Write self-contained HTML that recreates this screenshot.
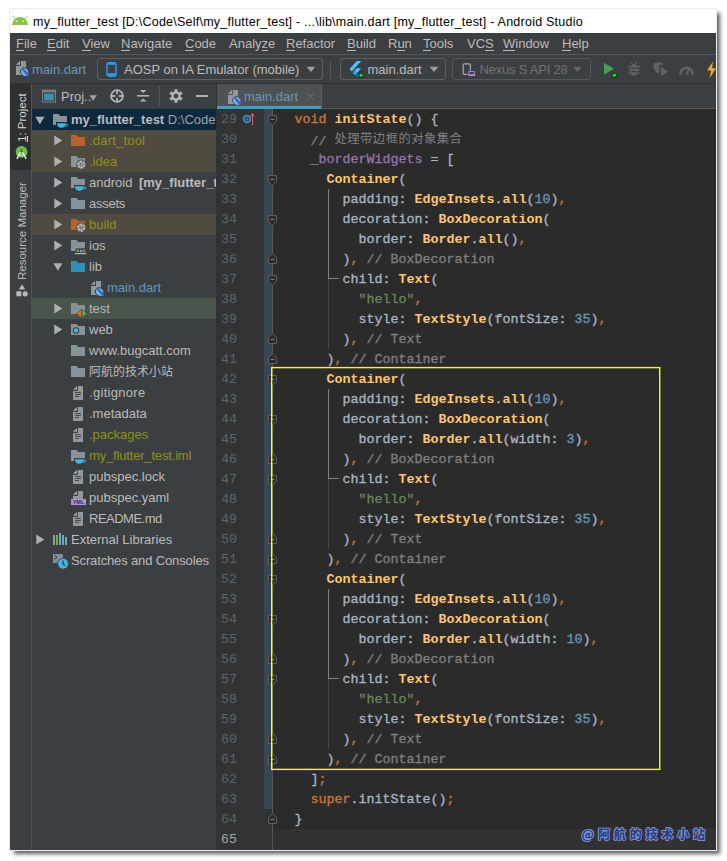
<!DOCTYPE html>
<html lang="zh">
<head>
<meta charset="utf-8">
<title>my_flutter_test - Android Studio</title>
<style>
html,body{margin:0;padding:0;background:#fff;}
body{width:727px;height:861px;position:relative;overflow:hidden;font-family:"Liberation Sans","Noto Sans CJK SC",sans-serif;font-size:13px;color:#bbbbbb;}
.abs,#win>div,#win>svg{position:absolute;box-sizing:border-box;}
#win div,#win svg{box-sizing:border-box;}
#shadow{position:absolute;left:10px;top:9px;width:706px;height:841px;box-shadow:3.5px 3.5px 4px 0px rgba(0,0,0,.62);}
#win{position:absolute;left:0;top:0;width:727px;height:861px;}
#frame{left:10px;top:9px;width:706px;height:841px;background:#3c3f41;}
#edge{left:9px;top:8px;width:708px;height:843px;border:1px solid #ececec;}
#title{left:10px;top:9px;width:706px;height:24px;background:#fff;}
#titletxt{left:33px;top:13.5px;height:16px;line-height:16px;font-size:12.5px;letter-spacing:0.23px;color:#000;white-space:pre;}
#menubar{left:10px;top:33px;width:706px;height:21px;background:#3c3f41;}
.mi{top:35px;height:18px;line-height:18px;font-size:13px;color:#bbbbbb;white-space:pre;}
.mu{top:50px;height:1px;background:#bbbbbb;}
#msep{left:10px;top:54px;width:706px;height:1px;background:#555758;}
#toolbar{left:10px;top:55px;width:706px;height:28px;background:#3c3f41;}
#tsep{left:10px;top:83px;width:706px;height:1px;background:#323232;}
/* stripe */
#stripe{left:10px;top:84px;width:21px;height:766px;background:#3c3f41;}
#stripesep{left:31px;top:84px;width:1px;height:766px;background:#515456;}
#sbtn1{left:10px;top:84px;width:21px;height:86px;background:#2d2f30;}
.vtxt{transform-origin:0 0;transform:rotate(-90deg);white-space:pre;font-size:12px;color:#bbbbbb;height:16px;line-height:16px;}
/* project panel */
#proj{left:32px;top:84px;width:184px;height:766px;background:#3c3f41;}
#projsep{left:216px;top:84px;width:1px;height:766px;background:#323232;}
.row{left:32px;width:184px;height:21px;}
.tl{height:21px;line-height:21px;font-size:13px;white-space:pre;color:#bbbbbb;}
.tl b{font-weight:700;}
.ol{color:#8f901a;}
.md{color:#6897bb;}
/* editor */
#tabs{left:217px;top:84px;width:499px;height:25px;background:#3c3f41;}
#tab1{left:217px;top:84px;width:104px;height:25px;background:#4e5254;}
#tabul{left:217px;top:106px;width:104px;height:3px;background:#3f9fbf;}
#tabsline{left:321px;top:108px;width:395px;height:1px;background:#575a5c;}
#tabedge{left:321px;top:84px;width:1px;height:24px;background:#5a5d5f;}
#gutter{left:217px;top:109px;width:55px;height:741px;background:#313335;}
#gline{left:272px;top:109px;width:1px;height:741px;background:#555555;}
#gmod{left:264px;top:109px;width:8px;height:700px;background:#374752;}
#code{left:273px;top:109px;width:443px;height:741px;background:#2b2b2b;}
#caret{left:273px;top:829px;width:443px;height:21px;background:#323232;}
.ln{left:217px;width:20px;height:20px;line-height:20px;text-align:right;font-family:"Liberation Mono",monospace;font-size:13.33px;color:#606366;}
.ln.cur{color:#a4a3a3;}
.cl{height:20px;line-height:20px;font-family:"Liberation Mono","Noto Sans CJK SC",monospace;font-size:13.33px;white-space:pre;color:#a9b7c6;}
.cl span{-webkit-text-stroke:0.3px currentColor;}
.cl span.f,.cl span.cc{-webkit-text-stroke:0;}
.k{color:#cc7832;}
.f{color:#ffc66d;font-weight:700;}
.c{color:#808080;}
.cc{color:#808080;font-family:"Noto Sans CJK SC",sans-serif;font-size:12.4px;letter-spacing:0.4px;position:relative;top:-2px;}
.s{color:#6a8759;}
.n{color:#6897bb;}
.v{color:#9876aa;}
.d{color:#a9b7c6;}

.ig{width:1px;background:#474747;}
.igb{width:1px;background:#808080;}
.igh{height:1px;background:#808080;}
#wm{left:578px;top:824px;height:20px;line-height:20px;font-size:12px;white-space:pre;font-weight:700;letter-spacing:1.3px;color:#3b4a8f;-webkit-text-stroke:0.6px #7f9cf5;font-family:"Noto Sans CJK SC","Liberation Sans",sans-serif;}
</style>
</head>
<body>
<div id="shadow"></div>
<div id="win">
<div id="edge"></div>
<div id="frame"></div>
<div id="title"></div>
<svg class="abs" style="left:12px;top:15px" width="17" height="11" viewBox="0 0 17 11"><path d="M0 10C0.2 5.2 3.8 1.9 8 1.9C12.2 1.9 15.8 5.2 16 10Z" fill="#8bc34a"/><path d="M0.5 0.9L3.2 3.9M15.5 0.9L12.8 3.9" stroke="#8bc34a" stroke-width="0.9"/><circle cx="4.5" cy="6.4" r="0.8" fill="#fff"/><circle cx="11.4" cy="6.4" r="0.8" fill="#fff"/></svg>
<div id="titletxt">my_flutter_test [D:\Code\Self\my_flutter_test] - ...\lib\main.dart [my_flutter_test] - Android Studio</div>
<div id="menubar"></div>
<div class="mi" style="left:16px">File</div>
<div class="mu" style="left:16px;width:8.0px"></div>
<div class="mi" style="left:47px">Edit</div>
<div class="mu" style="left:47px;width:8.7px"></div>
<div class="mi" style="left:82px">View</div>
<div class="mu" style="left:82px;width:8.7px"></div>
<div class="mi" style="left:121px">Navigate</div>
<div class="mu" style="left:121px;width:9.4px"></div>
<div class="mi" style="left:185px">Code</div>
<div class="mu" style="left:185px;width:9.4px"></div>
<div class="mi" style="left:229px">Analyze</div>
<div class="mu" style="left:261.5px;width:6.5px"></div>
<div class="mi" style="left:286px">Refactor</div>
<div class="mu" style="left:286px;width:9.4px"></div>
<div class="mi" style="left:347px">Build</div>
<div class="mu" style="left:347px;width:8.7px"></div>
<div class="mi" style="left:388px">Run</div>
<div class="mu" style="left:397.4px;width:7.2px"></div>
<div class="mi" style="left:423px">Tools</div>
<div class="mu" style="left:423px;width:8.0px"></div>
<div class="mi" style="left:467px">VCS</div>
<div class="mu" style="left:485.1px;width:8.7px"></div>
<div class="mi" style="left:503px">Window</div>
<div class="mu" style="left:503px;width:12.3px"></div>
<div class="mi" style="left:562px">Help</div>
<div class="mu" style="left:562px;width:9.4px"></div>
<div id="msep"></div>
<div id="toolbar"></div>
<svg class="abs" style="left:16px;top:61px" width="10" height="14" viewBox="0 0 10 14"><path d="M3.9 0V3.7H0Z" fill="#a3abb0"/><path d="M4.9 0H10V14H0V4.9H4.9Z" fill="#8f989e"/></svg>
<svg class="abs" style="left:19px;top:67px" width="11" height="11" viewBox="0 0 11 11"><g transform="translate(0.6 0.2)"><path d="M3.4 0.6L6.8 0.9L9.2 3.8V9.2H4.2L0.9 5.9L1 2.6Z" fill="#6cb4f2" stroke="#3c3f41" stroke-width="1"/><path d="M2 1.9L3.4 0.9L9 6.2V8.6L7.6 8.9Z" fill="#3c62b5"/></g></svg>
<div class="abs" style="left:32px;top:59.5px;height:20px;line-height:20px;font-size:13px;white-space:pre;color:#6897bb;">main.dart</div>
<div class="abs" style="left:97px;top:58px;width:226px;height:22px;border:1px solid #5e6060;border-radius:3px;"></div>
<svg class="abs" style="left:106px;top:62px" width="11" height="15" viewBox="0 0 11 15"><rect x="1" y="0.8" width="9" height="13.4" rx="2" fill="none" stroke="#2a9df4" stroke-width="1.4"/><rect x="1.6" y="1.2" width="7.8" height="1.6" fill="#2a9df4"/><rect x="1.6" y="11.2" width="7.8" height="2.6" fill="#2a9df4"/></svg>
<div class="abs" style="left:124px;top:59.5px;height:20px;line-height:20px;font-size:13px;white-space:pre;color:#bbbbbb;">AOSP on IA Emulator (mobile)</div>
<svg class="abs" style="left:306px;top:66px" width="10" height="7" viewBox="0 0 10 7"><g transform="translate(0.5 0.5)"><path d="M0.2 0.3H8.8L4.5 5.6Z" fill="#9da0a2"/></g></svg>
<div class="abs" style="left:330px;top:61px;width:1px;height:18px;background:#555758"></div>
<div class="abs" style="left:340px;top:58px;width:106px;height:22px;border:1px solid #5e6060;border-radius:3px;"></div>
<svg class="abs" style="left:349px;top:60px" width="17" height="19" viewBox="0 0 17 19"><g transform="translate(0.5 1) scale(0.046 0.0505)"><path d="M157.666 0L0 157.666L48.8 206.466L255.268 0Z" fill="#47c5fb"/><path d="M156.567 145.397L72.15 229.815L120.95 278.6L255.268 145.397Z" fill="#47c5fb"/><path d="M120.95 278.6L158.214 316.612L255.267 316.612L169.842 230.999Z" fill="#0b62b5"/><path d="M72.15 229.815L120.95 278.6L169.842 230.999L121 181Z" fill="#1fa6ef"/></g><circle cx="12.1" cy="15.2" r="2.5" fill="#111"/><circle cx="12.1" cy="15.2" r="1.8" fill="#12e012"/></svg>
<div class="abs" style="left:367.5px;top:59.5px;height:20px;line-height:20px;font-size:13px;white-space:pre;color:#bbbbbb;">main.dart</div>
<svg class="abs" style="left:429px;top:66px" width="10" height="7" viewBox="0 0 10 7"><g transform="translate(0.5 0.5)"><path d="M0.2 0.3H8.8L4.5 5.6Z" fill="#9da0a2"/></g></svg>
<div class="abs" style="left:452px;top:58px;width:139px;height:22px;border:1px solid #55585a;border-radius:3px;"></div>
<svg class="abs" style="left:462px;top:63px" width="15" height="14" viewBox="0 0 15 14"><rect x="1.2" y="0.9" width="7.2" height="10.4" rx="1" fill="none" stroke="#a6a9ab" stroke-width="1.2"/><rect x="5.4" y="7.6" width="8.6" height="6" fill="#3c3f41"/><rect x="6.8" y="8.6" width="5.6" height="2.8" fill="none" stroke="#b18fd6" stroke-width="0.9"/><rect x="6" y="12" width="7.4" height="0.9" fill="#b18fd6"/></svg>
<div class="abs" style="left:479.5px;top:59.5px;height:20px;line-height:20px;font-size:13px;white-space:pre;color:#6f7375;letter-spacing:-0.22px;">Nexus S API 28</div>
<svg class="abs" style="left:573px;top:66px" width="9" height="7" viewBox="0 0 9 7"><g transform="translate(0 0.5)"><path d="M0.2 0.3H8.8L4.5 5.6Z" fill="#62666a"/></g></svg>
<svg class="abs" style="left:603px;top:62px" width="15" height="16" viewBox="0 0 15 16"><path d="M1 0.8L11 6.8L1 12.8Z" fill="#499c54"/><circle cx="11.3" cy="13.2" r="2.5" fill="#1b1b1b"/><circle cx="11.3" cy="13.2" r="1.8" fill="#12e012"/></svg>
<svg class="abs" style="left:627px;top:61px" width="14" height="16" viewBox="0 0 14 16"><path d="M4 0.8L5.8 3.8M10 0.8L8.2 3.8" stroke="#5f6365" stroke-width="1.2"/><ellipse cx="7" cy="9" rx="3.6" ry="6.1" fill="#5f6365"/><path d="M1 5.7H13M1 8.8H13M1 12.2H13" stroke="#5f6365" stroke-width="1.2"/><rect x="4.8" y="6.6" width="4.4" height="1.3" fill="#3c3f41"/><rect x="4.8" y="9.9" width="4.4" height="1.3" fill="#3c3f41"/></svg>
<svg class="abs" style="left:653px;top:62px" width="16" height="15" viewBox="0 0 16 15"><path d="M0.5 1.5L6 0.3L9.5 1.2V3H6.2V11.6C3 10.5 0.5 8 0.5 4.5Z" fill="#5f6365"/><path d="M7.8 4.6L15 9.4L7.8 14.2Z" fill="#5f6365"/></svg>
<svg class="abs" style="left:679px;top:63px" width="15" height="13" viewBox="0 0 15 13"><path d="M1.6 11.8A6 6 0 1 1 13.4 11.8" fill="none" stroke="#5f6365" stroke-width="2.6"/><path d="M7.4 11.8L10.6 4.4" stroke="#5f6365" stroke-width="2.2"/></svg>
<svg class="abs" style="left:706px;top:61px" width="10" height="18" viewBox="0 0 10 18"><path d="M7 0.5L1 9.6H5.2L3.4 17.5L10 7.2H6Z" fill="#f0a732"/></svg>
<div id="tsep"></div>
<div id="stripe"></div>
<div id="sbtn1"></div>
<div id="stripesep"></div>
<div class="abs vtxt" style="left:14px;top:142px;font-size:11.5px;color:#d6d6d6;">1: Project</div>
<div class="abs" style="left:27px;top:135.6px;width:1px;height:6.4px;background:#d6d6d6"></div>
<svg class="abs" style="left:15px;top:145px" width="14" height="15" viewBox="0 0 14 15"><circle cx="6.5" cy="6.8" r="5.9" fill="#6cc04a"/><path d="M6.5 2.6L8 7.6H5Z" fill="#4a6a48"/><path d="M5.4 7.2L1.9 13.8M7.6 7.2L11.1 13.8" stroke="#ececec" stroke-width="1.4"/><path d="M4 10.6Q6.5 9.4 9 10.6" stroke="#dfe8da" stroke-width="1" fill="none"/></svg>
<div class="abs vtxt" style="left:14px;top:279.5px;font-size:11.5px;">Resource Manager</div>
<svg class="abs" style="left:16px;top:284px" width="12" height="13" viewBox="0 0 12 13"><path d="M6 0.3L9.2 5.6H2.8Z" fill="#b4bdb6"/><rect x="0.3" y="7.3" width="5" height="5" fill="#b4bdb6"/><circle cx="9.2" cy="9.8" r="2.6" fill="#b4bdb6"/></svg>
<div id="proj"></div>
<div class="row" style="top:109px;background:#0d293e"></div>
<div class="row" style="top:130px;background:#4f4b41"></div>
<div class="row" style="top:151px;background:#4f4b41"></div>
<div class="row" style="top:214px;background:#4f4b41"></div>
<div class="row" style="top:298px;background:#49544a"></div>
<svg class="abs" style="left:35px;top:116px" width="10" height="9" viewBox="0 0 10 9"><g transform="translate(0 0.5)"><path d="M0.3 0.3H9.5L4.9 7.8Z" fill="#adafb1"/></g></svg>
<svg class="abs" style="left:53px;top:113px" width="14" height="13" viewBox="0 0 14 13"><g transform="translate(0 0.5)"><path d="M0 0.5H5.6L7.2 2.6H14V11.5H0Z" fill="#86939b"/></g></svg>
<svg class="abs" style="left:56px;top:122px" width="13" height="7" viewBox="0 0 13 7"><rect x="0" y="0" width="13" height="7" fill="#0d293e"/><path d="M1 1.2H9.5C9.5 4 8 5.7 5.25 5.7C2.5 5.7 1 4 1 1.2Z" fill="#40b6e0"/><ellipse cx="10" cy="3" rx="1.7" ry="1.1" fill="none" stroke="#40b6e0" stroke-width="0.9"/></svg>
<div class="tl " style="left:71px;top:109px"><b>my_flutter_test</b> <span style="color:#a0a3a6">D:\Code</span></div>
<svg class="abs" style="left:54px;top:135px" width="9" height="11" viewBox="0 0 9 11"><path d="M0.3 0.6L8.3 5.5L0.3 10.4Z" fill="#adafb1"/></svg>
<svg class="abs" style="left:71px;top:134px" width="14" height="13" viewBox="0 0 14 13"><g transform="translate(0 0.5)"><path d="M0 0.5H5.6L7.2 2.6H14V11.5H0Z" fill="#b5622f"/></g></svg>
<div class="tl ol" style="left:89px;top:130px;letter-spacing:0.2px">.dart_tool</div>
<svg class="abs" style="left:54px;top:156px" width="9" height="11" viewBox="0 0 9 11"><path d="M0.3 0.6L8.3 5.5L0.3 10.4Z" fill="#adafb1"/></svg>
<svg class="abs" style="left:71px;top:155px" width="14" height="13" viewBox="0 0 14 13"><g transform="translate(0 0.5)"><path d="M0 0.5H5.6L7.2 2.6H14V11.5H0Z" fill="#86939b"/></g></svg>
<svg class="abs" style="left:76px;top:159px" width="11" height="11" viewBox="0 0 11 11"><g transform="translate(0.2 0.6)"><circle cx="5" cy="5" r="5" fill="#4f4b41"/><circle cx="5" cy="5" r="4.2" fill="#bcc2c6"/><g transform="translate(5 5)"><path d="M0 0Q1.7 -1.3 1.1 -4.3" transform="rotate(0)" stroke="#4f4b41" stroke-width="0.75" fill="none"/><path d="M0 0Q1.7 -1.3 1.1 -4.3" transform="rotate(60)" stroke="#4f4b41" stroke-width="0.75" fill="none"/><path d="M0 0Q1.7 -1.3 1.1 -4.3" transform="rotate(120)" stroke="#4f4b41" stroke-width="0.75" fill="none"/><path d="M0 0Q1.7 -1.3 1.1 -4.3" transform="rotate(180)" stroke="#4f4b41" stroke-width="0.75" fill="none"/><path d="M0 0Q1.7 -1.3 1.1 -4.3" transform="rotate(240)" stroke="#4f4b41" stroke-width="0.75" fill="none"/><path d="M0 0Q1.7 -1.3 1.1 -4.3" transform="rotate(300)" stroke="#4f4b41" stroke-width="0.75" fill="none"/><circle r="0.9" fill="#86a596"/></g></g></svg>
<div class="tl ol" style="left:89px;top:151px">.idea</div>
<svg class="abs" style="left:54px;top:177px" width="9" height="11" viewBox="0 0 9 11"><path d="M0.3 0.6L8.3 5.5L0.3 10.4Z" fill="#adafb1"/></svg>
<svg class="abs" style="left:71px;top:176px" width="14" height="13" viewBox="0 0 14 13"><g transform="translate(0 0.5)"><path d="M0 0.5H5.6L7.2 2.6H14V11.5H0Z" fill="#86939b"/></g></svg>
<svg class="abs" style="left:74px;top:185px" width="13" height="7" viewBox="0 0 13 7"><rect x="0" y="0" width="13" height="7" fill="#3c3f41"/><path d="M1 1.2H9.5C9.5 4 8 5.7 5.25 5.7C2.5 5.7 1 4 1 1.2Z" fill="#40b6e0"/><ellipse cx="10" cy="3" rx="1.7" ry="1.1" fill="none" stroke="#40b6e0" stroke-width="0.9"/></svg>
<div class="tl " style="left:89px;top:172px">android <b style="margin-left:3px">[my_flutter_t</b></div>
<svg class="abs" style="left:54px;top:198px" width="9" height="11" viewBox="0 0 9 11"><path d="M0.3 0.6L8.3 5.5L0.3 10.4Z" fill="#adafb1"/></svg>
<svg class="abs" style="left:71px;top:197px" width="14" height="13" viewBox="0 0 14 13"><g transform="translate(0 0.5)"><path d="M0 0.5H5.6L7.2 2.6H14V11.5H0Z" fill="#86939b"/></g></svg>
<div class="tl " style="left:89px;top:193px;letter-spacing:-0.25px">assets</div>
<svg class="abs" style="left:54px;top:219px" width="9" height="11" viewBox="0 0 9 11"><path d="M0.3 0.6L8.3 5.5L0.3 10.4Z" fill="#adafb1"/></svg>
<svg class="abs" style="left:71px;top:218px" width="14" height="13" viewBox="0 0 14 13"><g transform="translate(0 0.5)"><path d="M0 0.5H5.6L7.2 2.6H14V11.5H0Z" fill="#b5622f"/></g></svg>
<svg class="abs" style="left:76px;top:222px" width="11" height="11" viewBox="0 0 11 11"><g transform="translate(0.2 0.6)"><circle cx="5" cy="5" r="5" fill="#4f4b41"/><circle cx="5" cy="5" r="4.2" fill="#bcc2c6"/><g transform="translate(5 5)"><path d="M0 0Q1.7 -1.3 1.1 -4.3" transform="rotate(0)" stroke="#4f4b41" stroke-width="0.75" fill="none"/><path d="M0 0Q1.7 -1.3 1.1 -4.3" transform="rotate(60)" stroke="#4f4b41" stroke-width="0.75" fill="none"/><path d="M0 0Q1.7 -1.3 1.1 -4.3" transform="rotate(120)" stroke="#4f4b41" stroke-width="0.75" fill="none"/><path d="M0 0Q1.7 -1.3 1.1 -4.3" transform="rotate(180)" stroke="#4f4b41" stroke-width="0.75" fill="none"/><path d="M0 0Q1.7 -1.3 1.1 -4.3" transform="rotate(240)" stroke="#4f4b41" stroke-width="0.75" fill="none"/><path d="M0 0Q1.7 -1.3 1.1 -4.3" transform="rotate(300)" stroke="#4f4b41" stroke-width="0.75" fill="none"/><circle r="0.9" fill="#86a596"/></g></g></svg>
<div class="tl ol" style="left:89px;top:214px">build</div>
<svg class="abs" style="left:54px;top:240px" width="9" height="11" viewBox="0 0 9 11"><path d="M0.3 0.6L8.3 5.5L0.3 10.4Z" fill="#adafb1"/></svg>
<svg class="abs" style="left:71px;top:239px" width="14" height="13" viewBox="0 0 14 13"><g transform="translate(0 0.5)"><path d="M0 0.5H5.6L7.2 2.6H14V11.5H0Z" fill="#86939b"/></g></svg>
<svg class="abs" style="left:74px;top:248px" width="13" height="7" viewBox="0 0 13 7"><rect x="1.6" y="0.4" width="11.4" height="4.4" fill="#3c3f41"/><rect x="2.8" y="1.8" width="2.3" height="2.4" fill="#62b543"/><rect x="6" y="1.8" width="2.2" height="2.4" fill="#40b6e0"/><rect x="8.9" y="1.8" width="2.3" height="2.4" fill="#f26522"/><rect x="0.9" y="5" width="11.3" height="1.2" fill="#afb9c0"/></svg>
<div class="tl " style="left:89px;top:235px">ios</div>
<svg class="abs" style="left:53px;top:263px" width="10" height="8" viewBox="0 0 10 8"><path d="M0.3 0.3H9.5L4.9 7.8Z" fill="#adafb1"/></svg>
<svg class="abs" style="left:71px;top:260px" width="14" height="13" viewBox="0 0 14 13"><g transform="translate(0 0.5)"><path d="M0 0.5H5.6L7.2 2.6H14V11.5H0Z" fill="#358fb4"/></g></svg>
<div class="tl " style="left:89px;top:256px">lib</div>
<svg class="abs" style="left:54px;top:303px" width="9" height="11" viewBox="0 0 9 11"><path d="M0.3 0.6L8.3 5.5L0.3 10.4Z" fill="#adafb1"/></svg>
<svg class="abs" style="left:71px;top:302px" width="14" height="13" viewBox="0 0 14 13"><g transform="translate(0 0.5)"><path d="M0 0.5H5.6L7.2 2.6H14V11.5H0Z" fill="#86939b"/></g></svg>
<svg class="abs" style="left:76px;top:309px" width="11" height="9" viewBox="0 0 11 9"><g transform="translate(0.7 0)"><path d="M0 4.5L4.6 0.3V8.7Z" fill="#e5792b" stroke="#49544a" stroke-width="0.8"/><path d="M10 4.5L5.4 0.3V8.7Z" fill="#62b543" stroke="#49544a" stroke-width="0.8"/></g></svg>
<div class="tl " style="left:89px;top:298px">test</div>
<svg class="abs" style="left:54px;top:324px" width="9" height="11" viewBox="0 0 9 11"><path d="M0.3 0.6L8.3 5.5L0.3 10.4Z" fill="#adafb1"/></svg>
<svg class="abs" style="left:71px;top:323px" width="14" height="13" viewBox="0 0 14 13"><g transform="translate(0 0.5)"><path d="M0 0.5H5.6L7.2 2.6H14V11.5H0Z" fill="#86939b"/></g></svg>
<svg class="abs" style="left:72px;top:327px" width="8" height="7" viewBox="0 0 8 7"><g transform="translate(0.5 0)"><circle cx="3.5" cy="3.5" r="3.2" fill="#3c3f41"/><circle cx="3.5" cy="3.5" r="2.2" fill="#40b6e0"/></g></svg>
<div class="tl " style="left:89px;top:319px">web</div>
<svg class="abs" style="left:71px;top:344px" width="14" height="13" viewBox="0 0 14 13"><g transform="translate(0 0.5)"><path d="M0 0.5H5.6L7.2 2.6H14V11.5H0Z" fill="#86939b"/></g></svg>
<div class="tl " style="left:89px;top:340px">www.bugcatt.com</div>
<svg class="abs" style="left:71px;top:365px" width="14" height="13" viewBox="0 0 14 13"><g transform="translate(0 0.5)"><path d="M0 0.5H5.6L7.2 2.6H14V11.5H0Z" fill="#86939b"/></g></svg>
<div class="tl " style="left:89px;top:361px"><span style="font-size:12px">阿航的技术小站</span></div>
<svg class="abs" style="left:73px;top:386px" width="10" height="14" viewBox="0 0 10 14"><path d="M3.9 0V3.7H0Z" fill="#a3abb0"/><path d="M4.9 0H10V14H0V4.9H4.9Z" fill="#8f989e"/><path d="M2.1 6.5H7.9M2.1 8.5H7.9M2.1 10.5H6" stroke="#3c3f41" stroke-width="0.9"/></svg>
<div class="tl " style="left:89px;top:382px;letter-spacing:0.3px">.gitignore</div>
<svg class="abs" style="left:73px;top:407px" width="10" height="14" viewBox="0 0 10 14"><path d="M3.9 0V3.7H0Z" fill="#a3abb0"/><path d="M4.9 0H10V14H0V4.9H4.9Z" fill="#8f989e"/><path d="M2.1 6.5H7.9M2.1 8.5H7.9M2.1 10.5H6" stroke="#3c3f41" stroke-width="0.9"/></svg>
<div class="tl " style="left:89px;top:403px">.metadata</div>
<svg class="abs" style="left:73px;top:428px" width="10" height="14" viewBox="0 0 10 14"><path d="M3.9 0V3.7H0Z" fill="#a3abb0"/><path d="M4.9 0H10V14H0V4.9H4.9Z" fill="#8f989e"/><path d="M2.1 6.5H7.9M2.1 8.5H7.9M2.1 10.5H6" stroke="#3c3f41" stroke-width="0.9"/></svg>
<div class="tl ol" style="left:89px;top:424px">.packages</div>
<svg class="abs" style="left:71px;top:449px" width="14" height="13" viewBox="0 0 14 13"><g transform="translate(0 0.5)"><path d="M0 0.5H5.6L7.2 2.6H14V11.5H0Z" fill="#86939b"/></g></svg>
<svg class="abs" style="left:74px;top:458px" width="13" height="7" viewBox="0 0 13 7"><rect x="0" y="0" width="13" height="7" fill="#3c3f41"/><path d="M1 1.2H9.5C9.5 4 8 5.7 5.25 5.7C2.5 5.7 1 4 1 1.2Z" fill="#40b6e0"/><ellipse cx="10" cy="3" rx="1.7" ry="1.1" fill="none" stroke="#40b6e0" stroke-width="0.9"/></svg>
<div class="tl ol" style="left:89px;top:445px;letter-spacing:-0.17px">my_flutter_test.iml</div>
<svg class="abs" style="left:73px;top:470px" width="10" height="14" viewBox="0 0 10 14"><path d="M3.9 0V3.7H0Z" fill="#a3abb0"/><path d="M4.9 0H10V14H0V4.9H4.9Z" fill="#8f989e"/><path d="M2.1 6.5H7.9M2.1 8.5H7.9M2.1 10.5H6" stroke="#3c3f41" stroke-width="0.9"/></svg>
<div class="tl " style="left:89px;top:466px">pubspec.lock</div>
<svg class="abs" style="left:73px;top:491px" width="10" height="14" viewBox="0 0 10 14"><path d="M3.9 0V3.7H0Z" fill="#a3abb0"/><path d="M4.9 0H10V14H0V4.9H4.9Z" fill="#8f989e"/></svg>
<div class="abs" style="left:71px;top:499px;width:15px;height:6px;background:#b18fd6;"></div>
<div class="abs" style="left:71px;top:499px;width:15px;height:6px;line-height:6px;font-size:5.5px;font-weight:700;color:#3a2b57;text-align:center;letter-spacing:0px;">YML</div>
<div class="tl " style="left:89px;top:487px">pubspec.yaml</div>
<svg class="abs" style="left:73px;top:512px" width="10" height="14" viewBox="0 0 10 14"><path d="M3.9 0V3.7H0Z" fill="#a3abb0"/><path d="M4.9 0H10V14H0V4.9H4.9Z" fill="#8f989e"/><path d="M2.1 6.5H7.9M2.1 8.5H7.9M2.1 10.5H6" stroke="#3c3f41" stroke-width="0.9"/></svg>
<div class="tl " style="left:89px;top:508px;letter-spacing:-0.5px">README.md</div>
<svg class="abs" style="left:91px;top:281px" width="10" height="14" viewBox="0 0 10 14"><path d="M3.9 0V3.7H0Z" fill="#a3abb0"/><path d="M4.9 0H10V14H0V4.9H4.9Z" fill="#8f989e"/></svg>
<svg class="abs" style="left:94px;top:287px" width="11" height="11" viewBox="0 0 11 11"><g transform="translate(0.6 0.1)"><path d="M3.4 0.6L6.8 0.9L9.2 3.8V9.2H4.2L0.9 5.9L1 2.6Z" fill="#6cb4f2" stroke="#3c3f41" stroke-width="1"/><path d="M2 1.9L3.4 0.9L9 6.2V8.6L7.6 8.9Z" fill="#3c62b5"/></g></svg>
<div class="tl md" style="left:107px;top:277px">main.dart</div>
<svg class="abs" style="left:36px;top:534px" width="9" height="11" viewBox="0 0 9 11"><path d="M0.3 0.6L8.3 5.5L0.3 10.4Z" fill="#adafb1"/></svg>
<svg class="abs" style="left:53px;top:533px" width="14" height="12" viewBox="0 0 14 12"><rect x="0" y="2" width="2" height="10" fill="#8f9ba3"/><rect x="3" y="2" width="2" height="10" fill="#62b543"/><rect x="6" y="0" width="2" height="12" fill="#8f9ba3"/><rect x="9" y="2" width="2" height="10" fill="#40b6e0"/><rect x="12" y="4" width="2" height="8" fill="#8f9ba3"/></svg>
<div class="tl " style="left:71px;top:529px">External Libraries</div>
<svg class="abs" style="left:53px;top:552px" width="17" height="18" viewBox="0 0 17 18"><path d="M0 2H10V11H0Z" fill="#828e95"/><path d="M1.4 3.2L4 5.2L1.4 7.2" stroke="#3c3f41" stroke-width="1" fill="none"/><circle cx="10.1" cy="11.8" r="5.8" fill="#3c3f41"/><circle cx="10.1" cy="11.8" r="5" fill="#40b6e0"/><path d="M10.1 8.6V12.2L12 13.6" stroke="#3c3f41" stroke-width="1.2" fill="none"/></svg>
<div class="tl " style="left:71px;top:550px;letter-spacing:-0.14px">Scratches and Consoles</div>
<div id="projsep"></div>
<div id="tabs"></div>
<div id="tab1"></div>
<div id="tabul"></div>
<div id="tabsline"></div>
<div id="tabedge"></div>
<svg class="abs" style="left:42px;top:89px" width="14" height="14" viewBox="0 0 14 14"><g transform="translate(0 0.6)"><rect x="0.5" y="0.5" width="13" height="12" fill="none" stroke="#7d8286" stroke-width="1"/><rect x="0.5" y="0.5" width="13" height="2.2" fill="#7d8286"/><rect x="2.1" y="3.9" width="9.8" height="7" fill="#3d8fb0"/></g></svg>
<div class="abs" style="left:61px;top:86px;height:21px;line-height:21px;font-size:13px;white-space:pre;color:#bbbbbb">Proj..</div>
<svg class="abs" style="left:89px;top:95px" width="9" height="6" viewBox="0 0 9 6"><path d="M0.3 0.3H8L4.15 5.8Z" fill="#9da0a2"/></svg>
<svg class="abs" style="left:110px;top:89px" width="14" height="14" viewBox="0 0 14 14"><circle cx="7" cy="7" r="5.9" fill="none" stroke="#afb1b3" stroke-width="1.8"/><path d="M7 0.5V5.3M7 8.7V13.5M0.5 7H5.3M8.7 7H13.5" stroke="#afb1b3" stroke-width="1.8"/></svg>
<svg class="abs" style="left:136px;top:89px" width="14" height="14" viewBox="0 0 14 14"><path d="M1 6.8H13.2" stroke="#afb1b3" stroke-width="1.6"/><path d="M3.8 1H10.6L7.2 4Z" fill="#afb1b3"/><path d="M3.8 12.6H10.6L7.2 9.6Z" fill="#afb1b3"/></svg>
<div class="abs" style="left:159px;top:86px;width:1px;height:20px;background:#555758"></div>
<svg class="abs" style="left:169px;top:89px" width="14" height="14" viewBox="0 0 14 14"><g transform="translate(7 7)"><g fill="#afb1b3"><rect x="-1.7" y="-6.8" width="3.4" height="13.6" rx="0.6"/><rect x="-1.7" y="-6.8" width="3.4" height="13.6" rx="0.6" transform="rotate(60)"/><rect x="-1.7" y="-6.8" width="3.4" height="13.6" rx="0.6" transform="rotate(120)"/><circle r="4.7"/></g><circle r="2.3" fill="#3c3f41"/></g></svg>
<div class="abs" style="left:196px;top:95px;width:12px;height:2px;background:#afb1b3"></div>
<svg class="abs" style="left:228px;top:90px" width="10" height="14" viewBox="0 0 10 14"><path d="M3.9 0V3.7H0Z" fill="#a3abb0"/><path d="M4.9 0H10V14H0V4.9H4.9Z" fill="#8f989e"/></svg>
<svg class="abs" style="left:231px;top:96px" width="11" height="10" viewBox="0 0 11 10"><g transform="translate(0.7 0)"><path d="M3.4 0.6L6.8 0.9L9.2 3.8V9.2H4.2L0.9 5.9L1 2.6Z" fill="#6cb4f2" stroke="#4e5254" stroke-width="1"/><path d="M2 1.9L3.4 0.9L9 6.2V8.6L7.6 8.9Z" fill="#3c62b5"/></g></svg>
<div class="abs" style="left:244px;top:86px;height:21px;line-height:21px;font-size:13px;white-space:pre;color:#6897bb">main.dart</div>
<svg class="abs" style="left:306px;top:92px" width="9" height="9" viewBox="0 0 9 9"><path d="M0.8 0.8L8.2 8.2M8.2 0.8L0.8 8.2" stroke="#6e7173" stroke-width="1"/></svg>
<div id="gutter"></div>
<div id="gmod"></div>
<div id="code"></div>
<div id="caret"></div>
<div id="gline"></div>
<div class="ln" style="top:110px">29</div>
<div class="ln" style="top:130px">30</div>
<div class="ln" style="top:150px">31</div>
<div class="ln" style="top:170px">32</div>
<div class="ln" style="top:190px">33</div>
<div class="ln" style="top:210px">34</div>
<div class="ln" style="top:230px">35</div>
<div class="ln" style="top:250px">36</div>
<div class="ln" style="top:270px">37</div>
<div class="ln" style="top:290px">38</div>
<div class="ln" style="top:310px">39</div>
<div class="ln" style="top:330px">40</div>
<div class="ln" style="top:350px">41</div>
<div class="ln" style="top:370px">42</div>
<div class="ln" style="top:390px">43</div>
<div class="ln" style="top:410px">44</div>
<div class="ln" style="top:430px">45</div>
<div class="ln" style="top:450px">46</div>
<div class="ln" style="top:470px">47</div>
<div class="ln" style="top:490px">48</div>
<div class="ln" style="top:510px">49</div>
<div class="ln" style="top:530px">50</div>
<div class="ln" style="top:550px">51</div>
<div class="ln" style="top:570px">52</div>
<div class="ln" style="top:590px">53</div>
<div class="ln" style="top:610px">54</div>
<div class="ln" style="top:630px">55</div>
<div class="ln" style="top:650px">56</div>
<div class="ln" style="top:670px">57</div>
<div class="ln" style="top:690px">58</div>
<div class="ln" style="top:710px">59</div>
<div class="ln" style="top:730px">60</div>
<div class="ln" style="top:750px">61</div>
<div class="ln" style="top:770px">62</div>
<div class="ln" style="top:790px">63</div>
<div class="ln" style="top:810px">64</div>
<div class="ln cur" style="top:830px">65</div>
<div class="igb" style="left:328px;top:189px;height:90px"></div>
<div class="ig" style="left:328px;top:279px;height:70px"></div>
<div class="igh" style="left:328px;top:278px;width:11px"></div>
<div class="igb" style="left:328px;top:389px;height:90px"></div>
<div class="ig" style="left:328px;top:479px;height:70px"></div>
<div class="igh" style="left:328px;top:478px;width:11px"></div>
<div class="igb" style="left:328px;top:589px;height:90px"></div>
<div class="ig" style="left:328px;top:679px;height:70px"></div>
<div class="igh" style="left:328px;top:678px;width:11px"></div>
<div class="cl" style="top:110px;left:294.5px"><span class="k">void </span><span class="f">initState</span><span class="d">() {</span></div>
<div class="cl" style="top:130px;left:310.5px"><span class="c">// </span><span class="cc">处理带边框的对象集合</span></div>
<div class="cl" style="top:150px;left:310.5px"><span class="v">_borderWidgets</span><span class="d"> = [</span></div>
<div class="cl" style="top:170px;left:326.5px"><span class="f">Container</span><span class="d">(</span></div>
<div class="cl" style="top:190px;left:342.5px"><span class="d">padding: </span><span class="f">EdgeInsets</span><span class="d">.</span><span class="f">all</span><span class="d">(</span><span class="n">10</span><span class="d">)</span><span class="k">,</span></div>
<div class="cl" style="top:210px;left:342.5px"><span class="d">decoration: </span><span class="f">BoxDecoration</span><span class="d">(</span></div>
<div class="cl" style="top:230px;left:358.5px"><span class="d">border: </span><span class="f">Border</span><span class="d">.</span><span class="f">all</span><span class="d">(</span><span class="d">)</span><span class="k">,</span></div>
<div class="cl" style="top:250px;left:342.5px"><span class="d">)</span><span class="k">,</span><span class="c"> // BoxDecoration</span></div>
<div class="cl" style="top:270px;left:342.5px"><span class="d">child: </span><span class="f">Text</span><span class="d">(</span></div>
<div class="cl" style="top:290px;left:358.5px"><span class="s">"hello"</span><span class="k">,</span></div>
<div class="cl" style="top:310px;left:358.5px"><span class="d">style: </span><span class="f">TextStyle</span><span class="d">(fontSize: </span><span class="n">35</span><span class="d">)</span><span class="k">,</span></div>
<div class="cl" style="top:330px;left:342.5px"><span class="d">)</span><span class="k">,</span><span class="c"> // Text</span></div>
<div class="cl" style="top:350px;left:326.5px"><span class="d">)</span><span class="k">,</span><span class="c"> // Container</span></div>
<div class="cl" style="top:370px;left:326.5px"><span class="f">Container</span><span class="d">(</span></div>
<div class="cl" style="top:390px;left:342.5px"><span class="d">padding: </span><span class="f">EdgeInsets</span><span class="d">.</span><span class="f">all</span><span class="d">(</span><span class="n">10</span><span class="d">)</span><span class="k">,</span></div>
<div class="cl" style="top:410px;left:342.5px"><span class="d">decoration: </span><span class="f">BoxDecoration</span><span class="d">(</span></div>
<div class="cl" style="top:430px;left:358.5px"><span class="d">border: </span><span class="f">Border</span><span class="d">.</span><span class="f">all</span><span class="d">(</span><span class="d">width: </span><span class="n">3</span><span class="d">)</span><span class="k">,</span></div>
<div class="cl" style="top:450px;left:342.5px"><span class="d">)</span><span class="k">,</span><span class="c"> // BoxDecoration</span></div>
<div class="cl" style="top:470px;left:342.5px"><span class="d">child: </span><span class="f">Text</span><span class="d">(</span></div>
<div class="cl" style="top:490px;left:358.5px"><span class="s">"hello"</span><span class="k">,</span></div>
<div class="cl" style="top:510px;left:358.5px"><span class="d">style: </span><span class="f">TextStyle</span><span class="d">(fontSize: </span><span class="n">35</span><span class="d">)</span><span class="k">,</span></div>
<div class="cl" style="top:530px;left:342.5px"><span class="d">)</span><span class="k">,</span><span class="c"> // Text</span></div>
<div class="cl" style="top:550px;left:326.5px"><span class="d">)</span><span class="k">,</span><span class="c"> // Container</span></div>
<div class="cl" style="top:570px;left:326.5px"><span class="f">Container</span><span class="d">(</span></div>
<div class="cl" style="top:590px;left:342.5px"><span class="d">padding: </span><span class="f">EdgeInsets</span><span class="d">.</span><span class="f">all</span><span class="d">(</span><span class="n">10</span><span class="d">)</span><span class="k">,</span></div>
<div class="cl" style="top:610px;left:342.5px"><span class="d">decoration: </span><span class="f">BoxDecoration</span><span class="d">(</span></div>
<div class="cl" style="top:630px;left:358.5px"><span class="d">border: </span><span class="f">Border</span><span class="d">.</span><span class="f">all</span><span class="d">(</span><span class="d">width: </span><span class="n">10</span><span class="d">)</span><span class="k">,</span></div>
<div class="cl" style="top:650px;left:342.5px"><span class="d">)</span><span class="k">,</span><span class="c"> // BoxDecoration</span></div>
<div class="cl" style="top:670px;left:342.5px"><span class="d">child: </span><span class="f">Text</span><span class="d">(</span></div>
<div class="cl" style="top:690px;left:358.5px"><span class="s">"hello"</span><span class="k">,</span></div>
<div class="cl" style="top:710px;left:358.5px"><span class="d">style: </span><span class="f">TextStyle</span><span class="d">(fontSize: </span><span class="n">35</span><span class="d">)</span><span class="k">,</span></div>
<div class="cl" style="top:730px;left:342.5px"><span class="d">)</span><span class="k">,</span><span class="c"> // Text</span></div>
<div class="cl" style="top:750px;left:326.5px"><span class="d">)</span><span class="k">,</span><span class="c"> // Container</span></div>
<div class="cl" style="top:770px;left:310.5px"><span class="d">]</span><span class="k">;</span></div>
<div class="cl" style="top:790px;left:310.5px"><span class="k">super</span><span class="d">.initState()</span><span class="k">;</span></div>
<div class="cl" style="top:810px;left:294.5px"><span class="d">}</span></div>
<svg class="abs" style="left:268px;top:115px" width="9" height="11" viewBox="0 0 9 11"><path d="M0.5 0.5H8.5V6.5L4.5 10.5L0.5 6.5Z" fill="#2b2b2b" stroke="#5e5e5e"/><path d="M2.5 4.5H6.5" stroke="#7c7c7c"/></svg>
<svg class="abs" style="left:268px;top:175px" width="9" height="11" viewBox="0 0 9 11"><path d="M0.5 0.5H8.5V6.5L4.5 10.5L0.5 6.5Z" fill="#2b2b2b" stroke="#5e5e5e"/><path d="M2.5 4.5H6.5" stroke="#7c7c7c"/></svg>
<svg class="abs" style="left:268px;top:215px" width="9" height="11" viewBox="0 0 9 11"><path d="M0.5 0.5H8.5V6.5L4.5 10.5L0.5 6.5Z" fill="#2b2b2b" stroke="#5e5e5e"/><path d="M2.5 4.5H6.5" stroke="#7c7c7c"/></svg>
<svg class="abs" style="left:268px;top:275px" width="9" height="11" viewBox="0 0 9 11"><path d="M0.5 0.5H8.5V6.5L4.5 10.5L0.5 6.5Z" fill="#2b2b2b" stroke="#5e5e5e"/><path d="M2.5 4.5H6.5" stroke="#7c7c7c"/></svg>
<svg class="abs" style="left:268px;top:375px" width="9" height="11" viewBox="0 0 9 11"><path d="M0.5 0.5H8.5V6.5L4.5 10.5L0.5 6.5Z" fill="#2b2b2b" stroke="#5e5e5e"/><path d="M2.5 4.5H6.5" stroke="#7c7c7c"/></svg>
<svg class="abs" style="left:268px;top:415px" width="9" height="11" viewBox="0 0 9 11"><path d="M0.5 0.5H8.5V6.5L4.5 10.5L0.5 6.5Z" fill="#2b2b2b" stroke="#5e5e5e"/><path d="M2.5 4.5H6.5" stroke="#7c7c7c"/></svg>
<svg class="abs" style="left:268px;top:475px" width="9" height="11" viewBox="0 0 9 11"><path d="M0.5 0.5H8.5V6.5L4.5 10.5L0.5 6.5Z" fill="#2b2b2b" stroke="#5e5e5e"/><path d="M2.5 4.5H6.5" stroke="#7c7c7c"/></svg>
<svg class="abs" style="left:268px;top:575px" width="9" height="11" viewBox="0 0 9 11"><path d="M0.5 0.5H8.5V6.5L4.5 10.5L0.5 6.5Z" fill="#2b2b2b" stroke="#5e5e5e"/><path d="M2.5 4.5H6.5" stroke="#7c7c7c"/></svg>
<svg class="abs" style="left:268px;top:615px" width="9" height="11" viewBox="0 0 9 11"><path d="M0.5 0.5H8.5V6.5L4.5 10.5L0.5 6.5Z" fill="#2b2b2b" stroke="#5e5e5e"/><path d="M2.5 4.5H6.5" stroke="#7c7c7c"/></svg>
<svg class="abs" style="left:268px;top:675px" width="9" height="11" viewBox="0 0 9 11"><path d="M0.5 0.5H8.5V6.5L4.5 10.5L0.5 6.5Z" fill="#2b2b2b" stroke="#5e5e5e"/><path d="M2.5 4.5H6.5" stroke="#7c7c7c"/></svg>
<svg class="abs" style="left:268px;top:253px" width="9" height="11" viewBox="0 0 9 11"><path d="M0.5 10.5H8.5V4.5L4.5 0.5L0.5 4.5Z" fill="#2b2b2b" stroke="#5e5e5e"/><path d="M2.5 6.5H6.5" stroke="#7c7c7c"/></svg>
<svg class="abs" style="left:268px;top:333px" width="9" height="11" viewBox="0 0 9 11"><path d="M0.5 10.5H8.5V4.5L4.5 0.5L0.5 4.5Z" fill="#2b2b2b" stroke="#5e5e5e"/><path d="M2.5 6.5H6.5" stroke="#7c7c7c"/></svg>
<svg class="abs" style="left:268px;top:353px" width="9" height="11" viewBox="0 0 9 11"><path d="M0.5 10.5H8.5V4.5L4.5 0.5L0.5 4.5Z" fill="#2b2b2b" stroke="#5e5e5e"/><path d="M2.5 6.5H6.5" stroke="#7c7c7c"/></svg>
<svg class="abs" style="left:268px;top:453px" width="9" height="11" viewBox="0 0 9 11"><path d="M0.5 10.5H8.5V4.5L4.5 0.5L0.5 4.5Z" fill="#2b2b2b" stroke="#5e5e5e"/><path d="M2.5 6.5H6.5" stroke="#7c7c7c"/></svg>
<svg class="abs" style="left:268px;top:533px" width="9" height="11" viewBox="0 0 9 11"><path d="M0.5 10.5H8.5V4.5L4.5 0.5L0.5 4.5Z" fill="#2b2b2b" stroke="#5e5e5e"/><path d="M2.5 6.5H6.5" stroke="#7c7c7c"/></svg>
<svg class="abs" style="left:268px;top:553px" width="9" height="11" viewBox="0 0 9 11"><path d="M0.5 10.5H8.5V4.5L4.5 0.5L0.5 4.5Z" fill="#2b2b2b" stroke="#5e5e5e"/><path d="M2.5 6.5H6.5" stroke="#7c7c7c"/></svg>
<svg class="abs" style="left:268px;top:653px" width="9" height="11" viewBox="0 0 9 11"><path d="M0.5 10.5H8.5V4.5L4.5 0.5L0.5 4.5Z" fill="#2b2b2b" stroke="#5e5e5e"/><path d="M2.5 6.5H6.5" stroke="#7c7c7c"/></svg>
<svg class="abs" style="left:268px;top:733px" width="9" height="11" viewBox="0 0 9 11"><path d="M0.5 10.5H8.5V4.5L4.5 0.5L0.5 4.5Z" fill="#2b2b2b" stroke="#5e5e5e"/><path d="M2.5 6.5H6.5" stroke="#7c7c7c"/></svg>
<svg class="abs" style="left:268px;top:753px" width="9" height="11" viewBox="0 0 9 11"><path d="M0.5 10.5H8.5V4.5L4.5 0.5L0.5 4.5Z" fill="#2b2b2b" stroke="#5e5e5e"/><path d="M2.5 6.5H6.5" stroke="#7c7c7c"/></svg>
<svg class="abs" style="left:268px;top:813px" width="9" height="11" viewBox="0 0 9 11"><path d="M0.5 10.5H8.5V4.5L4.5 0.5L0.5 4.5Z" fill="#2b2b2b" stroke="#5e5e5e"/><path d="M2.5 6.5H6.5" stroke="#7c7c7c"/></svg>
<svg class="abs" style="left:242px;top:112px" width="14" height="14" viewBox="0 0 14 14"><circle cx="5" cy="7" r="4.2" fill="#3a95c6"/><circle cx="5" cy="7" r="2.5" fill="#313335"/><circle cx="5" cy="7" r="1.5" fill="#3a95c6"/><circle cx="5" cy="7" r="0.7" fill="#313335"/><path d="M10.5 13.2V2.5" stroke="#db5860" stroke-width="1.1"/><path d="M8.2 4.2L10.5 0.8L12.8 4.2Z" fill="#db5860"/></svg>
<svg class="abs" style="left:268px;top:364px" width="396" height="410" viewBox="0 0 396 410"><rect x="3.7" y="3.6" width="388" height="401.8" fill="none" stroke="#fdfd10" stroke-width="1.4"/></svg>
<svg class="abs" style="left:570px;top:822px" width="146" height="26" viewBox="0 0 146 26"><text x="11.6" y="17.3" font-family="Noto Sans CJK SC, Liberation Sans, sans-serif" font-weight="900" font-size="12" letter-spacing="3.85" fill="#323d78" stroke="#86a3f8" stroke-width="1.5" stroke-linejoin="round" paint-order="stroke">@阿航的技术小站</text></svg>
</div>
</body>
</html>
